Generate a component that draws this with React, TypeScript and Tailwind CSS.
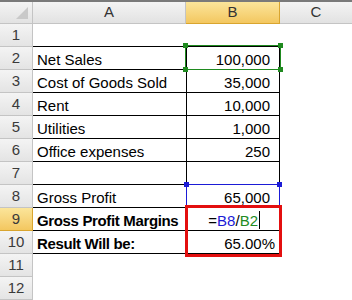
import React from "react";

const ROWS: { a?: string; b?: React.ReactNode; bold?: boolean; pct?: boolean }[] = [
  {},
  { a: "Net Sales", b: "100,000" },
  { a: "Cost of Goods Sold", b: "35,000" },
  { a: "Rent", b: "10,000" },
  { a: "Utilities", b: "1,000" },
  { a: "Office expenses", b: "250" },
  { a: "", b: "" },
  { a: "Gross Profit", b: "65,000" },
  { a: "Gross Profit Margins", bold: true },
  { a: "Result Will be:", b: "65.00%", bold: true, pct: true },
  {},
  {},
];

function Handle({ className }: { className: string }) {
  return <span className={"absolute z-20 h-[5px] w-[5px] " + className} />;
}

export default function App() {
  return (
    <div
      className="h-[300px] w-[352px] overflow-hidden bg-white text-[15px] text-black"
      style={{ fontFamily: '"Liberation Sans", Arial, sans-serif' }}
    >
      <div className="h-[2px] bg-[#7a7a7a]" />
      <div className="grid grid-cols-[33px_153px_94px_72px]">
        {/* header row */}
        <div className="relative h-[22px] border-r border-b border-[#c4c4c4] bg-gradient-to-b from-[#f4f4f4] to-[#e2e2e2]">
          <svg className="absolute right-[4px] bottom-[4px]" width="12" height="12" viewBox="0 0 12 12">
            <path d="M12 0 L12 12 L0 12 Z" fill="#c9c9c9" />
          </svg>
        </div>
        <div className="flex h-[22px] items-center justify-center border-r border-b border-[#c4c4c4] bg-gradient-to-b from-[#f4f4f4] to-[#e2e2e2] text-[#333]">
          A
        </div>
        <div className="flex h-[22px] items-center justify-center border-r border-b border-[#d9a52f] bg-gradient-to-b from-[#fbe59a] to-[#f3c75f] text-[#333]">
          B
        </div>
        <div className="flex h-[22px] items-center justify-center border-b border-[#c4c4c4] bg-gradient-to-b from-[#f4f4f4] to-[#e2e2e2] text-[#333]">
          C
        </div>

        {ROWS.map((r, i) => {
          const n = i + 1;
          const inTable = n >= 2 && n <= 10;
          const lineBelow = n >= 1 && n <= 10;
          return (
            <React.Fragment key={n}>
              <div
                className={
                  "flex h-[23px] items-center justify-center border-r border-b text-[#3a3a3a] " +
                  (n === 9
                    ? "border-[#d9a52f] bg-gradient-to-b from-[#fbe59a] to-[#f3c75f]"
                    : "border-[#c4c4c4] bg-gradient-to-b from-[#f4f4f4] to-[#e4e4e4]")
                }
              >
                {n}
              </div>
              <div
                className={
                  "flex h-[23px] items-end overflow-visible whitespace-nowrap pl-[4px] leading-[18px] " +
                  (lineBelow ? "border-b border-black " : "") +
                  (r.bold ? "font-bold tracking-[-0.35px]" : "")
                }
              >
                {r.a}
              </div>
              <div
                className={
                  "relative flex h-[23px] items-end justify-end leading-[18px] " +
                  (lineBelow ? "border-b border-black " : "") +
                  (inTable ? "border-r border-l border-black " : "") +
                  (r.pct ? "pr-[4px]" : "pr-[9px]")
                }
              >
                {n === 9 ? (
                  <span className="relative z-10 flex items-end pr-[10px]">
                    <span>=</span>
                    <span className="text-[#1b1bd6]">B8</span>
                    <span>/</span>
                    <span className="text-[#228b22]">B2</span>
                    <span className="ml-[1px] mb-[1px] h-[18px] w-[1px] bg-black" />
                  </span>
                ) : (
                  r.b
                )}
                {n === 2 && (
                  <>
                    <span className="pointer-events-none absolute -top-[2px] -left-[2px] -right-[2px] bottom-[-1px] border border-[#1f8a1f]" />
                    <Handle className="-top-[4px] -left-[4px] bg-[#1f8a1f]" />
                    <Handle className="-top-[4px] -right-[4px] bg-[#1f8a1f]" />
                    <Handle className="-bottom-[3px] -left-[4px] bg-[#1f8a1f]" />
                    <Handle className="-bottom-[3px] -right-[4px] bg-[#1f8a1f]" />
                  </>
                )}
                {n === 8 && (
                  <>
                    <span className="pointer-events-none absolute -top-[1px] -left-[1px] -right-[1px] bottom-0 border border-[#1b1bd6]" />
                    <Handle className="-top-[3px] -left-[3px] bg-[#1b1bd6]" />
                    <Handle className="-top-[3px] -right-[3px] bg-[#1b1bd6]" />
                  </>
                )}
                {n === 9 && (
                  <span className="pointer-events-none absolute -top-[3px] -left-[2px] z-30 h-[52px] w-[97px] border-[3px] border-[#e30f0f]" />
                )}
              </div>
              <div className="h-[23px]" />
            </React.Fragment>
          );
        })}
      </div>
    </div>
  );
}
